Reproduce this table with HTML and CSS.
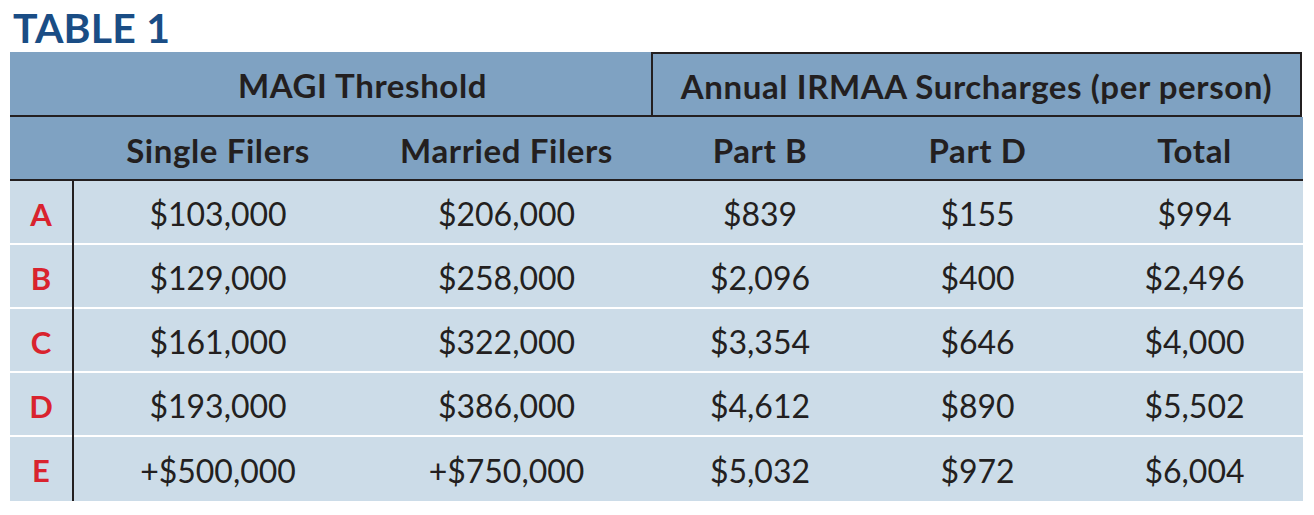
FILE: index.html
```html
<!DOCTYPE html>
<html>
<head>
<meta charset="utf-8">
<link rel="stylesheet" href="styles.css">
</head>
<body>
<div class="title">TABLE 1</div>
<div class="tbl">
  <div class="h1 magi">MAGI Threshold</div>
  <div class="h1 annual">Annual IRMAA Surcharges (per person)</div>

  <div class="h2"></div>
  <div class="h2">Single Filers</div>
  <div class="h2">Married Filers</div>
  <div class="h2">Part B</div>
  <div class="h2">Part D</div>
  <div class="h2">Total</div>

  <div class="c letter">A</div><div class="c">$103,000</div><div class="c">$206,000</div><div class="c">$839</div><div class="c">$155</div><div class="c">$994</div>
  <div class="c letter">B</div><div class="c">$129,000</div><div class="c">$258,000</div><div class="c">$2,096</div><div class="c">$400</div><div class="c">$2,496</div>
  <div class="c letter">C</div><div class="c">$161,000</div><div class="c">$322,000</div><div class="c">$3,354</div><div class="c">$646</div><div class="c">$4,000</div>
  <div class="c letter">D</div><div class="c">$193,000</div><div class="c">$386,000</div><div class="c">$4,612</div><div class="c">$890</div><div class="c">$5,502</div>
  <div class="c letter last">E</div><div class="c last">+$500,000</div><div class="c last">+$750,000</div><div class="c last">$5,032</div><div class="c last">$972</div><div class="c last">$6,004</div>
</div>
</body>
</html>
```

FILE: styles.css
```css
html, body {
  margin: 0;
  padding: 0;
  background: #ffffff;
}
body {
  font-family: Lato, "Open Sans", sans-serif;
  color: #231f20;
}
.title {
  font-weight: 700;
  font-size: 41px;
  line-height: 48px;
  color: #1a4d85;
  padding: 4px 0 0 13px;
  height: 48px;
  letter-spacing: 0.2px;
}
.tbl {
  margin-left: 10px;
  width: 1293px;
  display: grid;
  grid-template-columns: 64px 288px 289px 218px 217px 217px;
}
.h1, .h2 {
  background: #7fa2c2;
  box-sizing: border-box;
  border-bottom: 2px solid #231f20;
  display: flex;
  align-items: center;
  justify-content: center;
  font-weight: 700;
  font-size: 33px;
  letter-spacing: 0.6px;
  padding-top: 3px;
}
.h1 { height: 65px; }
.h2 { height: 64px; }
.magi {
  grid-column: span 3;
  padding-left: 64px;
}
.annual {
  grid-column: span 3;
  border: 2px solid #231f20;
  margin-right: 1px;
}
.c {
  background: #ccdce8;
  height: 64px;
  box-sizing: border-box;
  border-bottom: 2px solid #ffffff;
  display: flex;
  align-items: center;
  justify-content: center;
  font-size: 32px;
  padding-top: 2px;
}
.c.last {
  border-bottom: none;
}
.letter {
  border-bottom: none;
  box-shadow: inset 0 -2px 0 #ffffff;
  border-right: 2px solid #231f20;
  color: #d9232e;
  font-weight: 700;
  font-size: 31px;
}
.letter.last {
  box-shadow: none;
}
```
